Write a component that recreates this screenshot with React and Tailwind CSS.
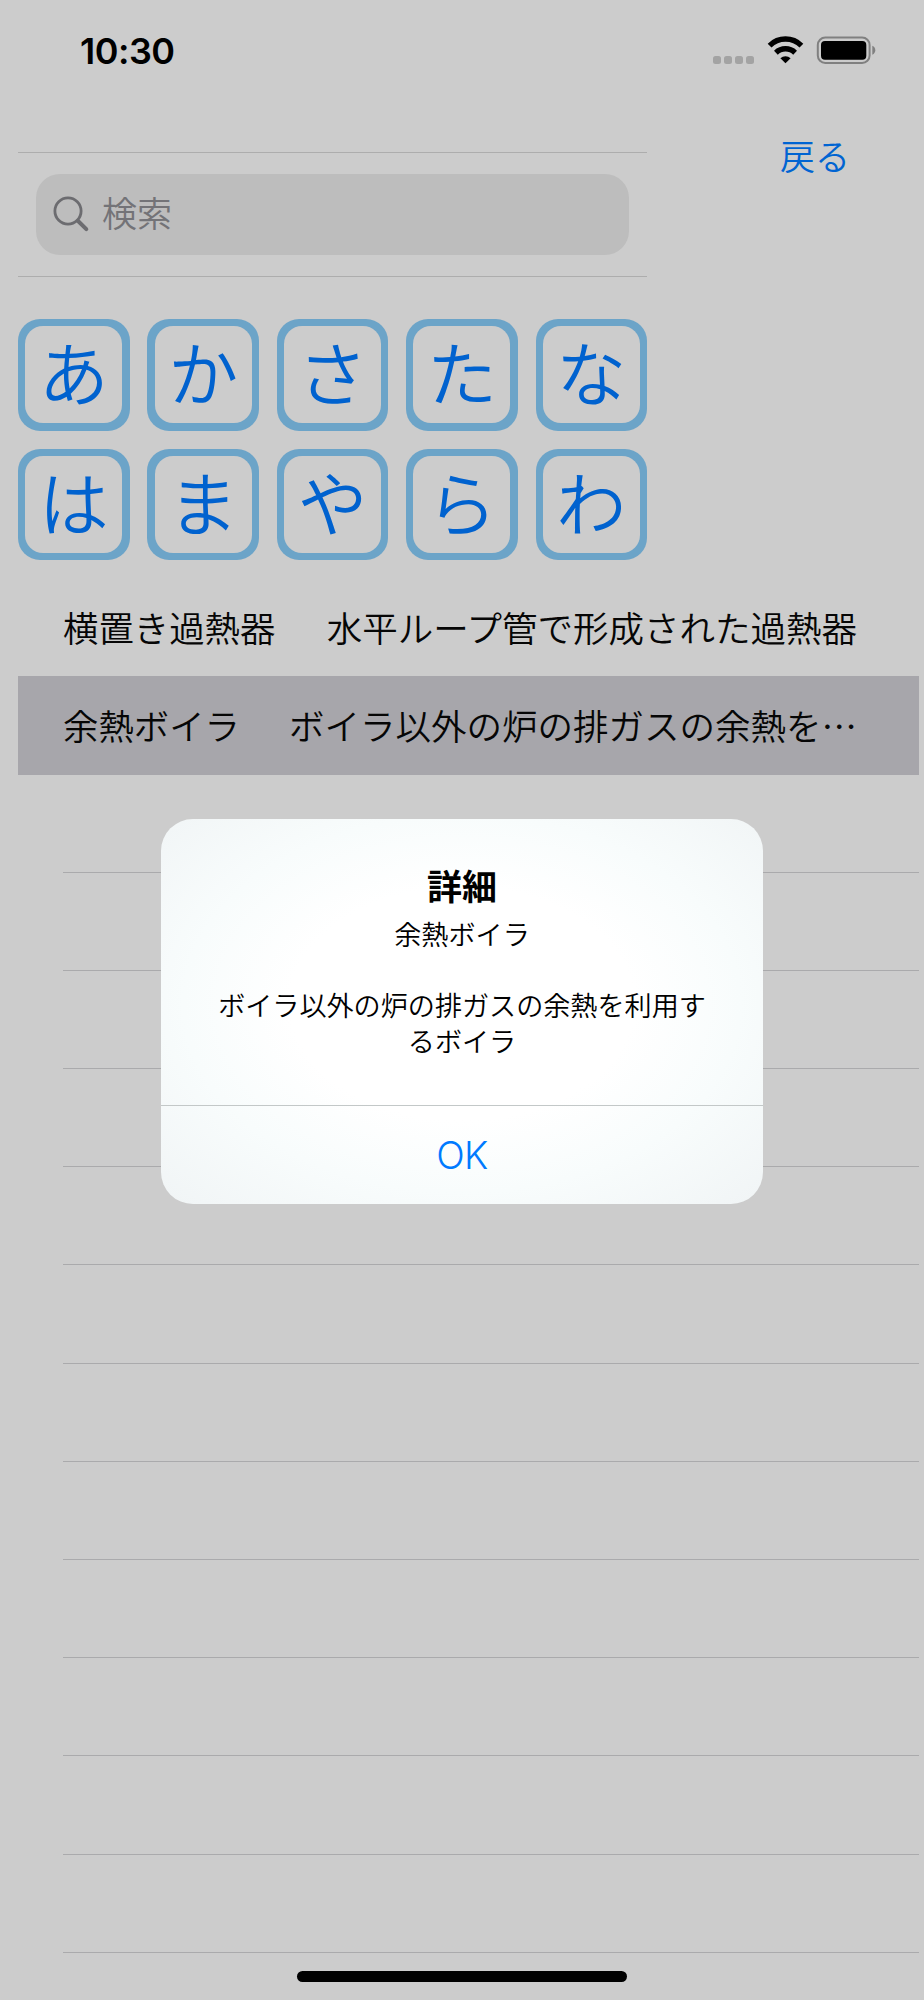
const kanaRows = [
  ["あ", "か", "さ", "た", "な"],
  ["は", "ま", "や", "ら", "わ"],
];

const terms = [
  { name: "横置き過熱器", description: "水平ループ管で形成された過熱器" },
  { name: "余熱ボイラ", description: "ボイラ以外の炉の排ガスの余熱を利用するボイラ", selected: true },
];

// Empty table rows keep their separators, like a UITableView
const emptyRows = Array.from({ length: 12 }, (_, i) => i);

const StatusBar = () => {
  return (
    <div className="flex h-[100px] items-start justify-between pl-[80px] pr-[48px]">
      <div className="mt-[29px] font-['Inter',sans-serif] text-[36px] leading-[44px] font-semibold tracking-[-0.5px] text-black">
        10:30
      </div>
      <div className="mt-[36px] flex items-start">
        {/* No signal dots */}
        <div className="mt-[20px] flex gap-[3.5px]">
          <span className="size-[7.6px] rounded-[2.5px] bg-[#a3a3a3]" />
          <span className="size-[7.6px] rounded-[2.5px] bg-[#a3a3a3]" />
          <span className="size-[7.6px] rounded-[2.5px] bg-[#a3a3a3]" />
          <span className="size-[7.6px] rounded-[2.5px] bg-[#a3a3a3]" />
        </div>
        {/* Wifi */}
        <svg className="ml-[13px]" width="37" height="28" viewBox="0 0 37 28" fill="none">
          <path d="M2.6 9.6 A22.6 22.6 0 0 1 34.4 9.6" stroke="#000" strokeWidth="5.4" />
          <path d="M8.9 16.7 A13.8 13.8 0 0 1 28.1 16.7" stroke="#000" strokeWidth="5.4" />
          <path d="M18.5 27.3 L13.4 22.3 A7.6 7.6 0 0 1 23.6 22.3 Z" fill="#000" />
        </svg>
        {/* Battery */}
        <svg className="ml-[12px]" width="60" height="28" viewBox="0 0 60 28" fill="none">
          <rect x="1.8" y="1.6" width="51.8" height="25.4" rx="7.5" stroke="#808080" strokeWidth="2" />
          <rect x="5" y="5" width="45.3" height="18.8" rx="4" fill="#000" />
          <path d="M56.3 9.8 C60.3 11.5 60.3 17 56.3 18.7 Z" fill="#808080" />
        </svg>
      </div>
    </div>
  );
};

const SearchBar = () => {
  return (
    <div className="border-y border-[#adadad] px-[18px] pt-[21px] pb-[21px]">
      <div className="flex h-[81px] items-center rounded-[24px] bg-[#bdbdbd] pl-[17px]">
        <svg width="37" height="37" viewBox="0 0 37 37" fill="none" stroke="#6c6c70" strokeLinecap="round">
          <circle cx="15" cy="15" r="13.1" strokeWidth="2.8" />
          <path d="M24.8 24.8 L33.3 33.1" strokeWidth="4" />
        </svg>
        <span className="ml-[12px] pb-[6px] text-[35px] leading-[50px] text-[#737377]">検索</span>
      </div>
    </div>
  );
};

const KanaButton = ({ label }) => {
  return (
    <button className="h-[111.5px] w-[111.5px] rounded-[22px] bg-[#6ca4c8] p-[7.2px]">
      <span className="flex h-full w-full items-center justify-center rounded-[18px] bg-[#cccccc] pb-[7px] text-[70px] leading-none text-[#0062cf]">
        {label}
      </span>
    </button>
  );
};

const TermRow = ({ name, description, selected }) => {
  return (
    <div
      className={
        selected
          ? "flex h-[98.5px] items-center bg-[#a7a6ab] pl-[45px] pr-[62px]"
          : "flex h-[98px] items-center pl-[45px] pr-[62px]"
      }
    >
      <span className="shrink-0 text-[35.4px] leading-[52px] whitespace-nowrap">{name}</span>
      <span className="ml-auto shrink-0 text-[35.5px] leading-[52px] whitespace-nowrap">
        {description.length > 16 ? description.slice(0, 15) + "…" : description}
      </span>
    </div>
  );
};

const DetailAlert = ({ title, name, description }) => {
  return (
    <div className="absolute top-[819px] left-[161px] flex h-[385px] w-[602px] flex-col overflow-hidden rounded-[32px] bg-[radial-gradient(ellipse_68%_72%_at_50%_48%,#ffffff_0%,#ffffff_42%,#f8fcfc_68%,#f1f5f6_100%)] text-center text-black">
      <div className="h-[286px] px-[54px] pt-[41px]">
        <h2 className="text-[35px] leading-[50px] font-bold">{title}</h2>
        <p className="mt-[6px] text-[27.1px] leading-[36px]">{name}</p>
        <p className="mt-[35px] text-[27.1px] leading-[36px]">{description}</p>
      </div>
      <button className="flex-1 border-t border-[#c3c8c8] pt-[2px] font-['Inter',sans-serif] text-[37.5px] leading-[46px] tracking-[-0.5px] text-[#007aff]">
        OK
      </button>
    </div>
  );
};

const App = () => {
  const current = terms.find((t) => t.selected);

  return (
    <div className="relative h-[2000px] w-[924px] overflow-hidden bg-[#cccccc] font-['Noto_Sans_CJK_JP',sans-serif] font-[350] text-[#060606]">
      <StatusBar />

      <div className="flex pl-[18px]">
        <div className="w-[629px] pt-[52px]">
          <SearchBar />
          <div className="mt-[42px] flex flex-col gap-[18px]">
            {kanaRows.map((row, i) => (
              <div key={i} className="flex justify-between">
                {row.map((label) => (
                  <KanaButton key={label} label={label} />
                ))}
              </div>
            ))}
          </div>
        </div>
        <div className="flex flex-1 items-start justify-end pt-[30px] pr-[74px]">
          <button className="text-[35px] leading-[50px] text-[#0064d2]">戻る</button>
        </div>
      </div>

      {/* Term list */}
      <div className="mt-[18px] ml-[18px] w-[901px]">
        {terms.map((term) => (
          <TermRow key={term.name} {...term} />
        ))}
        {emptyRows.map((i) => (
          <div key={i} className="ml-[45px] h-[98.2px] border-b border-[#aaaaac]" />
        ))}
      </div>

      <DetailAlert title="詳細" name={current.name} description={current.description} />

      {/* Home indicator */}
      <div className="absolute top-[1971px] left-[297px] h-[11px] w-[330px] rounded-full bg-black" />
    </div>
  );
};

export default App;
